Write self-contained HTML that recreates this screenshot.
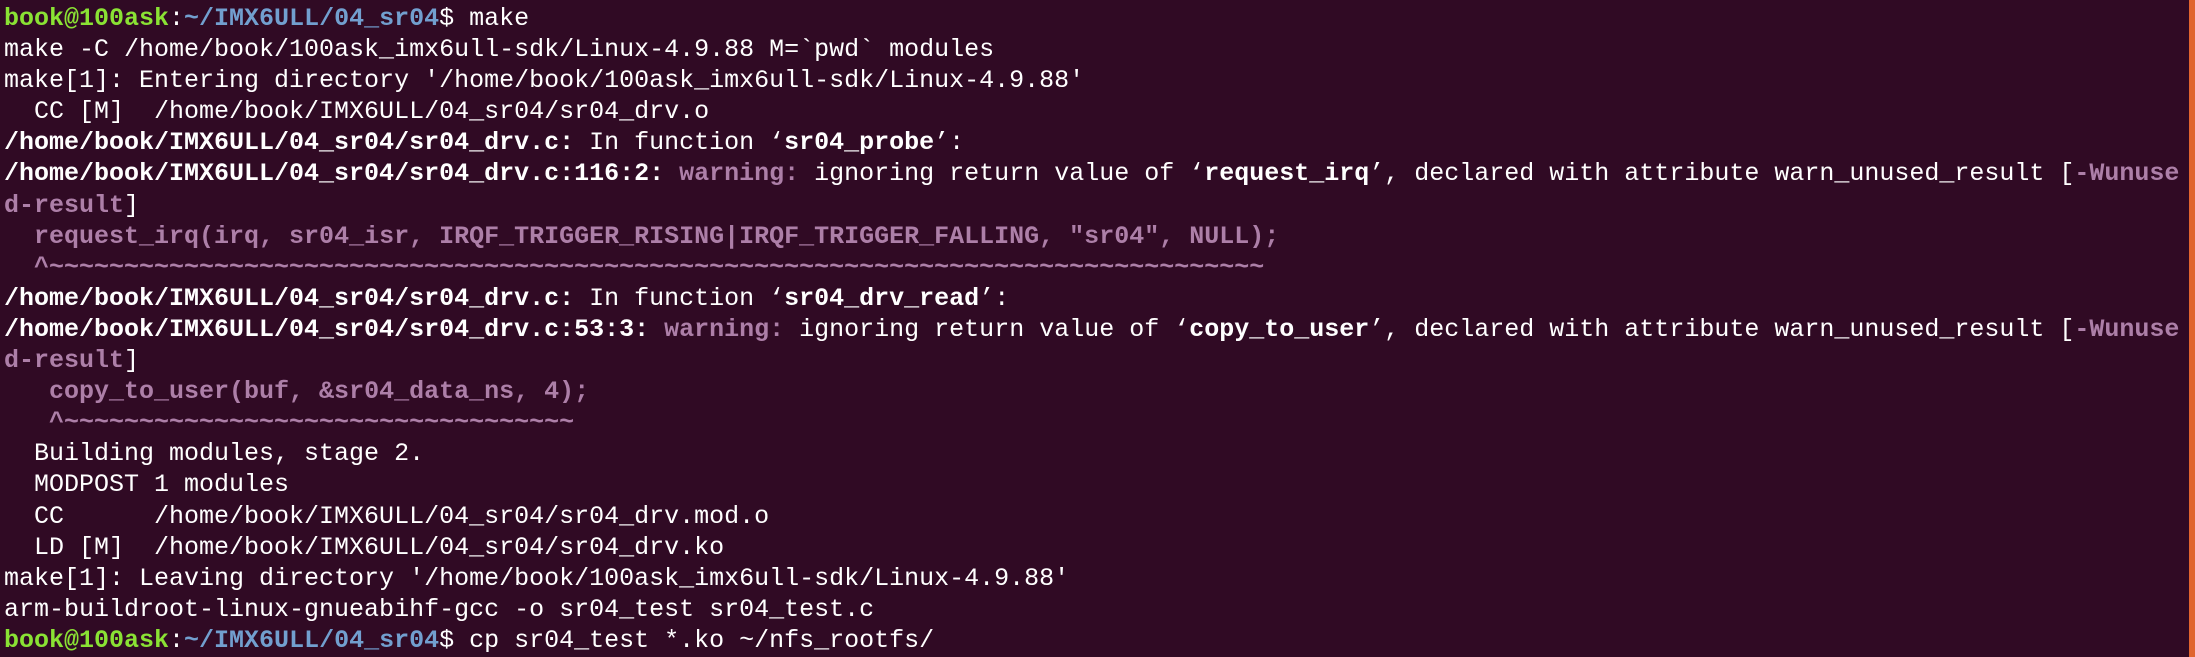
<!DOCTYPE html>
<html><head><meta charset="utf-8"><style>
html,body{margin:0;padding:0;background:#300a24;width:2195px;height:657px;overflow:hidden}
.t{position:absolute;left:4px;top:3px;font-family:"Liberation Mono",monospace;font-size:25px;color:#fff}
.t div{height:31.1px;line-height:31.1px;overflow:visible;white-space:pre}
.g{color:#8ae234;font-weight:bold}.b{color:#729fcf;font-weight:bold}
.w{font-weight:bold}.m{color:#ad7fa8;font-weight:bold}
.bar{position:absolute;right:0;top:0;width:6px;height:657px;background:#e0642e}
</style></head><body>
<div class="t"><div><span class="g">book@100ask</span>:<span class="b">~/IMX6ULL/04_sr04</span>$ make</div><div>make -C /home/book/100ask_imx6ull-sdk/Linux-4.9.88 M=`pwd` modules</div><div>make[1]: Entering directory '/home/book/100ask_imx6ull-sdk/Linux-4.9.88'</div><div>  CC [M]  /home/book/IMX6ULL/04_sr04/sr04_drv.o</div><div><span class="w">/home/book/IMX6ULL/04_sr04/sr04_drv.c:</span> In function ‘<span class="w">sr04_probe</span>’:</div><div><span class="w">/home/book/IMX6ULL/04_sr04/sr04_drv.c:116:2:</span> <span class="m">warning: </span>ignoring return value of ‘<span class="w">request_irq</span>’, declared with attribute warn_unused_result [<span class="m">-Wunuse</span></div><div><span class="m">d-result</span>]</div><div>  <span class="m">request_irq(irq, sr04_isr, IRQF_TRIGGER_RISING|IRQF_TRIGGER_FALLING, "sr04", NULL);</span></div><div>  <span class="m">^~~~~~~~~~~~~~~~~~~~~~~~~~~~~~~~~~~~~~~~~~~~~~~~~~~~~~~~~~~~~~~~~~~~~~~~~~~~~~~~~~</span></div><div><span class="w">/home/book/IMX6ULL/04_sr04/sr04_drv.c:</span> In function ‘<span class="w">sr04_drv_read</span>’:</div><div><span class="w">/home/book/IMX6ULL/04_sr04/sr04_drv.c:53:3:</span> <span class="m">warning: </span>ignoring return value of ‘<span class="w">copy_to_user</span>’, declared with attribute warn_unused_result [<span class="m">-Wunuse</span></div><div><span class="m">d-result</span>]</div><div>   <span class="m">copy_to_user(buf, &amp;sr04_data_ns, 4);</span></div><div>   <span class="m">^~~~~~~~~~~~~~~~~~~~~~~~~~~~~~~~~~~</span></div><div>  Building modules, stage 2.</div><div>  MODPOST 1 modules</div><div>  CC      /home/book/IMX6ULL/04_sr04/sr04_drv.mod.o</div><div>  LD [M]  /home/book/IMX6ULL/04_sr04/sr04_drv.ko</div><div>make[1]: Leaving directory '/home/book/100ask_imx6ull-sdk/Linux-4.9.88'</div><div>arm-buildroot-linux-gnueabihf-gcc -o sr04_test sr04_test.c</div><div><span class="g">book@100ask</span>:<span class="b">~/IMX6ULL/04_sr04</span>$ cp sr04_test *.ko ~/nfs_rootfs/</div></div>
<div class="bar"></div>
</body></html>
